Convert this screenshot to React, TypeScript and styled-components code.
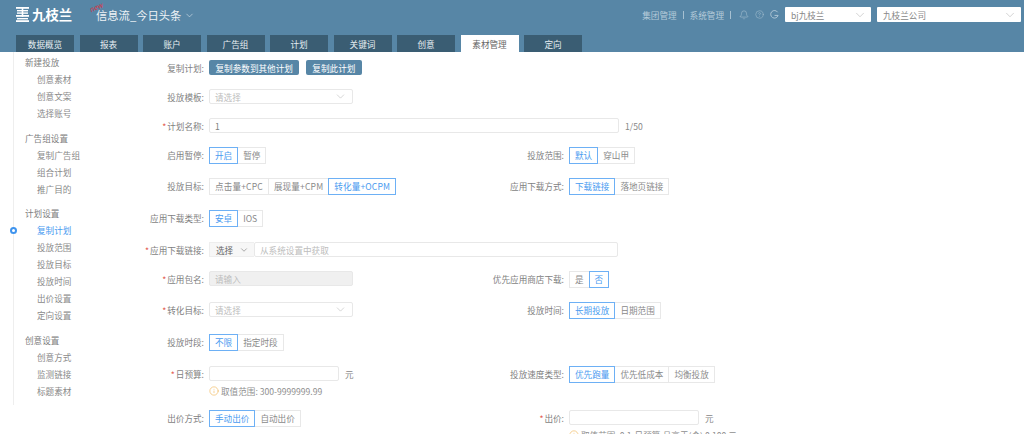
import React from 'react';
import styled, { createGlobalStyle } from 'styled-components';
import { Bell, ChevronDown, CircleHelp, Info } from 'lucide-react';

const GlobalStyle = createGlobalStyle`
  html, body {
    margin: 0;
    padding: 0;
    height: 440px;
    overflow: hidden;
    background: #fff;
    font-family: "Noto Sans CJK SC", "Noto Sans", sans-serif;
    font-size: 8.6px;
    color: #8a8a8a;
  }
  * { box-sizing: border-box; }
`;

const Header = styled.header`
  height: 52px;
  background: #5786a6;
  padding: 0 3px 0 16px;
  display: flex;
  flex-direction: column;
  justify-content: space-between;
`;

const TopBar = styled.div`
  display: flex;
  align-items: flex-start;
  padding-top: 7px;
  height: 35px;
`;

const Logo = styled.div`
  display: flex;
  align-items: center;
  gap: 3px;
  width: 80px;
  color: #fff;
  font-size: 13.4px;
  font-weight: 700;
  line-height: 15px;
`;

const Product = styled.div`
  position: relative;
  display: flex;
  align-items: center;
  gap: 3px;
  color: #eef3f6;
  font-size: 11.3px;
  line-height: 16px;
`;

const NewMark = styled.span`
  position: absolute;
  left: -7px;
  top: -8px;
  color: #d8303f;
  font-size: 7px;
  font-style: italic;
  transform: rotate(-24deg);
`;

const TopRight = styled.div`
  margin-left: auto;
  display: flex;
  align-items: center;
  height: 15px;
  color: #b5cbd9;
`;

const TopLink = styled.span`
  white-space: nowrap;
`;

const TopDivider = styled.span`
  width: 1px;
  height: 8px;
  margin: 0 6px;
  background: #a6c0d1;
`;

const TopIcons = styled.div`
  display: flex;
  align-items: center;
  gap: 6px;
  margin: 0 0 0 2px;
`;

const TopSelect = styled.div<{ $width: number }>`
  display: flex;
  align-items: center;
  justify-content: space-between;
  width: ${({ $width }) => $width}px;
  height: 15px;
  margin-left: 6px;
  padding: 0 4px 0 6px;
  background: #fff;
  border-radius: 1px;
  color: #888;
`;

const Tabs = styled.nav`
  display: flex;
  gap: 5.5px;
`;

const Tab = styled.div<{ $active?: boolean }>`
  width: 58px;
  height: 17px;
  display: flex;
  align-items: center;
  justify-content: center;
  background: ${({ $active }) => ($active ? '#fff' : '#3a5d73')};
  color: ${({ $active }) => ($active ? '#666' : '#e6edf1')};
`;

const Body = styled.div`
  display: flex;
  height: 382px;
  overflow: hidden;
`;

const Sidebar = styled.aside`
  position: relative;
  flex: none;
  align-self: flex-start;
  width: 117px;
  height: 353px;
  margin-left: 13px;
  padding: 2px 0 0 11px;
  border-left: 1.5px solid #eeeeee;
`;

const SideGroup = styled.div`
  margin-bottom: 7.5px;
`;

const SideTitle = styled.div`
  height: 17px;
  line-height: 17px;
  color: #808080;
`;

const SideItem = styled.div<{ $active?: boolean }>`
  position: relative;
  height: 17px;
  line-height: 17px;
  padding-left: 12px;
  color: ${({ $active }) => ($active ? '#4a9bf0' : '#8a8a8a')};
`;

const SideDot = styled.span`
  position: absolute;
  left: -15px;
  top: 5px;
  width: 7px;
  height: 7px;
  border-radius: 50%;
  background: #fff;
  border: 2px solid #3f94ee;
`;

const Form = styled.main`
  flex: 1;
  display: flex;
  flex-direction: column;
  padding-top: 8px;
`;

const Row = styled.div<{ $height: number }>`
  flex: none;
  display: grid;
  grid-template-columns: 360px 1fr;
  height: ${({ $height }) => $height}px;
`;

const Field = styled.div`
  display: flex;
  align-items: flex-start;
  gap: 5px;
`;

const Label = styled.label`
  flex: none;
  display: flex;
  justify-content: flex-end;
  width: 74px;
  height: 16px;
  line-height: 16px;
  white-space: nowrap;
  color: #7f7f7f;
`;

const Required = styled.span`
  color: #e2574c;
  margin-right: 1px;
`;

const Control = styled.div`
  display: flex;
  flex-direction: column;
`;

const Inline = styled.div`
  display: flex;
  align-items: center;
`;

const PrimaryButton = styled.button`
  height: 15px;
  padding: 0 6.5px;
  margin-right: 6.5px;
  border: 0;
  border-radius: 2px;
  background: #5786a6;
  color: #fff;
  font: inherit;
  white-space: nowrap;
`;

const RadioGroup = styled.div<{ $wide?: boolean }>`
  display: flex;
  letter-spacing: ${({ $wide }) => ($wide ? '0.13px' : 'normal')};
`;

const RadioButton = styled.div<{ $active?: boolean }>`
  height: 17px;
  line-height: 15px;
  padding: 0 5px;
  margin-left: -1px;
  white-space: nowrap;
  border: 1px solid ${({ $active }) => ($active ? '#6db0f5' : '#e8e8e8')};
  color: ${({ $active }) => ($active ? '#4a9bf0' : '#8a8a8a')};
  position: relative;
  z-index: ${({ $active }) => ($active ? 1 : 0)};
  &:first-child { margin-left: 0; }
`;

const TextBox = styled.div<{ $width: number; $disabled?: boolean }>`
  display: flex;
  align-items: center;
  justify-content: space-between;
  width: ${({ $width }) => $width}px;
  height: 15px;
  padding: 0 5px;
  border: 1px solid #e8e8e8;
  border-radius: 2px;
  background: ${({ $disabled }) => ($disabled ? '#f0f0f0' : '#fff')};
`;

const Placeholder = styled.span`
  color: #bdbdbd;
`;

const Value = styled.span`
  color: #808080;
`;

const Suffix = styled.span`
  margin-left: 6px;
  color: #888;
`;

const Prefix = styled.div`
  display: flex;
  align-items: center;
  justify-content: space-between;
  width: 45px;
  height: 15px;
  padding: 0 5px 0 6px;
  background: #f7f7f7;
  border: 1px solid #eeeeee;
  border-right: 0;
  color: #666;
`;

const Hint = styled.div`
  display: flex;
  align-items: center;
  gap: 2px;
  height: 14px;
  margin-top: 3px;
  white-space: nowrap;
  color: #8f8f8f;
`;

const selectChevron = <ChevronDown size={13} strokeWidth={1} color="#b5b5b5" />;
const topChevron = <ChevronDown size={14} strokeWidth={1} color="#b5b5b5" />;

function Radios({ items, active, wide }: { items: string[]; active: number; wide?: boolean }) {
  return (
    <RadioGroup $wide={wide}>
      {items.map((item, i) => (
        <RadioButton key={item} $active={i === active}>
          {item}
        </RadioButton>
      ))}
    </RadioGroup>
  );
}

const tabs = ['数据概览', '报表', '账户', '广告组', '计划', '关键词', '创意', '素材管理', '定向'];

const sideGroups = [
  { title: '新建投放', items: ['创意素材', '创意文案', '选择账号'] },
  { title: '广告组设置', items: ['复制广告组', '组合计划', '推广目的'] },
  { title: '计划设置', items: ['复制计划', '投放范围', '投放目标', '投放时间', '出价设置', '定向设置'] },
  { title: '创意设置', items: ['创意方式', '监测链接', '标题素材'] },
];

export default function App() {
  return (
    <>
      <GlobalStyle />
      <Header>
        <TopBar>
          <Logo>
            <svg width="13" height="15" viewBox="0 0 13 15" fill="#fff">
              <rect x="0" y="0" width="13" height="1.8" />
              <rect x="1" y="3" width="11" height="1.4" />
              <rect x="1" y="5.4" width="11" height="1.4" />
              <rect x="0" y="8" width="13" height="1.8" />
              <rect x="5.7" y="0" width="1.6" height="9.8" />
              <rect x="1" y="11" width="11" height="1.4" />
              <rect x="0" y="13.2" width="13" height="1.8" />
            </svg>
            九枝兰
          </Logo>
          <Product>
            <NewMark>new</NewMark>
            信息流_今日头条
            <ChevronDown size={11} strokeWidth={1.3} color="#dfe8ee" />
          </Product>
          <TopRight>
            <TopLink>集团管理</TopLink>
            <TopDivider />
            <TopLink>系统管理</TopLink>
            <TopDivider />
            <TopIcons>
              <Bell size={10} strokeWidth={1.2} />
              <CircleHelp size={9} strokeWidth={1.2} />
              <svg width="9" height="9" viewBox="0 0 10 10" fill="none" stroke="currentColor" strokeWidth="1">
                <path d="M8.5 2.5A4.2 4.2 0 1 0 9 6H5" />
              </svg>
            </TopIcons>
            <TopSelect $width={86}>
              bj九枝兰
              {topChevron}
            </TopSelect>
            <TopSelect $width={144}>
              九枝兰公司
              {topChevron}
            </TopSelect>
          </TopRight>
        </TopBar>
        <Tabs>
          {tabs.map((tab) => (
            <Tab key={tab} $active={tab === '素材管理'}>
              {tab}
            </Tab>
          ))}
        </Tabs>
      </Header>
      <Body>
        <Sidebar>
          {sideGroups.map((group) => (
            <SideGroup key={group.title}>
              <SideTitle>{group.title}</SideTitle>
              {group.items.map((item) => (
                <SideItem key={item} $active={item === '复制计划'}>
                  {item === '复制计划' && <SideDot />}
                  {item}
                </SideItem>
              ))}
            </SideGroup>
          ))}
        </Sidebar>
        <Form>
          <Row $height={29}>
            <Field>
              <Label>复制计划:</Label>
              <Inline>
                <PrimaryButton>复制参数到其他计划</PrimaryButton>
                <PrimaryButton>复制此计划</PrimaryButton>
              </Inline>
            </Field>
          </Row>
          <Row $height={29}>
            <Field>
              <Label>投放模板:</Label>
              <TextBox $width={144}>
                <Placeholder>请选择</Placeholder>
                {selectChevron}
              </TextBox>
            </Field>
          </Row>
          <Row $height={29}>
            <Field>
              <Label><Required>*</Required>计划名称:</Label>
              <Inline>
                <TextBox $width={410}>
                  <Value>1</Value>
                </TextBox>
                <Suffix>1/50</Suffix>
              </Inline>
            </Field>
          </Row>
          <Row $height={31}>
            <Field>
              <Label>启用暂停:</Label>
              <Radios items={['开启', '暂停']} active={0} />
            </Field>
            <Field>
              <Label>投放范围:</Label>
              <Radios items={['默认', '穿山甲']} active={0} />
            </Field>
          </Row>
          <Row $height={32}>
            <Field>
              <Label>投放目标:</Label>
              <Radios items={['点击量+CPC', '展现量+CPM', '转化量+OCPM']} active={2} wide />
            </Field>
            <Field>
              <Label>应用下载方式:</Label>
              <Radios items={['下载链接', '落地页链接']} active={0} />
            </Field>
          </Row>
          <Row $height={32}>
            <Field>
              <Label>应用下载类型:</Label>
              <Radios items={['安卓', 'IOS']} active={0} />
            </Field>
          </Row>
          <Row $height={29}>
            <Field>
              <Label><Required>*</Required>应用下载链接:</Label>
              <Inline>
                <Prefix>
                  选择
                  <ChevronDown size={10} strokeWidth={1.3} color="#666" />
                </Prefix>
                <TextBox $width={364}>
                  <Placeholder>从系统设置中获取</Placeholder>
                </TextBox>
              </Inline>
            </Field>
          </Row>
          <Row $height={31}>
            <Field>
              <Label><Required>*</Required>应用包名:</Label>
              <TextBox $width={144} $disabled>
                <Placeholder>请输入</Placeholder>
              </TextBox>
            </Field>
            <Field>
              <Label>优先应用商店下载:</Label>
              <Radios items={['是', '否']} active={1} />
            </Field>
          </Row>
          <Row $height={32}>
            <Field>
              <Label><Required>*</Required>转化目标:</Label>
              <TextBox $width={144}>
                <Placeholder>请选择</Placeholder>
                {selectChevron}
              </TextBox>
            </Field>
            <Field>
              <Label>投放时间:</Label>
              <Radios items={['长期投放', '日期范围']} active={0} />
            </Field>
          </Row>
          <Row $height={32}>
            <Field>
              <Label>投放时段:</Label>
              <Radios items={['不限', '指定时段']} active={0} />
            </Field>
          </Row>
          <Row $height={44}>
            <Field>
              <Label><Required>*</Required>日预算:</Label>
              <Control>
                <Inline>
                  <TextBox $width={130} />
                  <Suffix>元</Suffix>
                </Inline>
                <Hint>
                  <Info size={10} strokeWidth={1.2} color="#eda52e" />
                  取值范围: 300-9999999.99
                </Hint>
              </Control>
            </Field>
            <Field>
              <Label>投放速度类型:</Label>
              <Radios items={['优先跑量', '优先低成本', '均衡投放']} active={0} />
            </Field>
          </Row>
          <Row $height={40}>
            <Field>
              <Label>出价方式:</Label>
              <Radios items={['手动出价', '自动出价']} active={0} />
            </Field>
            <Field>
              <Label><Required>*</Required>出价:</Label>
              <Control>
                <Inline>
                  <TextBox $width={130} />
                  <Suffix>元</Suffix>
                </Inline>
                <Hint>
                  <Info size={10} strokeWidth={1.2} color="#eda52e" />
                  取值范围: 0.1-日预算,且高于(含) 0.100 元
                </Hint>
              </Control>
            </Field>
          </Row>
        </Form>
      </Body>
    </>
  );
}
